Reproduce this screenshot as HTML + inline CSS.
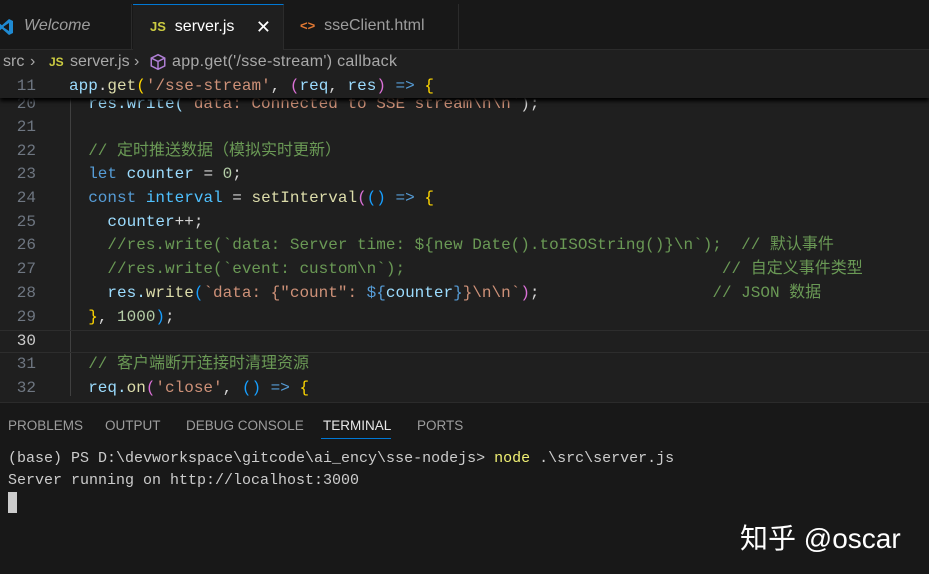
<!DOCTYPE html>
<html><head><meta charset="utf-8"><style>
*{margin:0;padding:0;box-sizing:border-box}
body{width:929px;height:574px;overflow:hidden;background:#1f1f1f;font-family:"Liberation Sans","Noto Sans CJK SC",sans-serif;position:relative;color:#ccc}
.tabs{position:absolute;left:0;top:0;width:929px;height:50px;background:#181818;border-bottom:1px solid #2b2b2b}
.tab{position:absolute;top:4px;height:46px;font-size:16px;line-height:44px;color:#9d9d9d;border-right:1px solid #2b2b2b}
.ed{position:absolute;left:0;top:50px;width:929px;height:352px;background:#1f1f1f;overflow:hidden}
.m{font-family:"Liberation Mono","Noto Sans CJK SC",monospace;font-size:16px;white-space:pre;line-height:24px;height:24px}
.ln{position:absolute;left:0;width:36px;text-align:right;color:#6e7681}
.cd{position:absolute;left:69px;color:#9cdcfe}
.c{color:#6a9955}.k{color:#569cd6}.f{color:#dcdcaa}.s{color:#ce9178}.y{color:#ffd700}.p{color:#da70d6}.b{color:#179fff}.n{color:#b5cea8}.w{color:#d4d4d4}
.panel{position:absolute;left:0;top:402px;width:929px;height:172px;background:#181818;border-top:1px solid #2b2b2b}
.pt{position:absolute;top:15px;font-size:13.5px;color:#9d9d9d}
.t{position:absolute;left:8px;font-family:"Liberation Mono",monospace;font-size:15px;color:#cccccc;white-space:pre}
.bc{position:absolute;left:0;top:51px;height:24px;font-size:16px;line-height:22px;color:#a9a9a9;white-space:nowrap;z-index:5;background:#1f1f1f;width:929px}
.bc span{position:absolute;top:0}
</style></head><body>
<div class="tabs">
 <div class="tab" style="left:0;width:132px;font-style:italic;padding-left:24px">Welcome
  <svg style="position:absolute;left:-4px;top:14px" width="18" height="18" viewBox="0 0 18 18"><path d="M13 1 L17 3 V15 L13 17 L4 9 Z" fill="#1f8ad2"/><path d="M13 5 V13 L7 9 Z" fill="#181818"/><path d="M0 6 L3 5 L8 9 L3 13 L0 12 Z" fill="#1f8ad2"/></svg></div>
 <div class="tab" style="left:133px;width:151px;background:#1f1f1f;color:#fff;border-top:1px solid #0078d4;padding-left:17px"><span style="color:#cbcb41;font-weight:bold;font-size:13px">JS</span>&nbsp; server.js<span style="position:absolute;right:12px;top:0;font-size:18px">✕</span></div>
 <div class="tab" style="left:284px;width:175px;padding-left:16px"><span style="color:#e37933;font-size:13px;font-weight:bold">&lt;&gt;</span>&nbsp; sseClient.html</div>
</div>
<div class="ed">
 <div style="position:absolute;left:70px;top:46px;width:1px;height:300px;background:#404040"></div>
 <div style="position:absolute;left:0;top:280px;width:929px;height:23px;border-top:1px solid #2d2d2d;border-bottom:1px solid #2d2d2d"></div>
 <div class="m ln" style="top:42px">20</div><div class="m cd" style="top:42px">  res.write(<span class="s">`data: Connected to SSE stream\n\n`</span><span class="w">);</span></div>
 <div class="m ln" style="top:65px">21</div>
 <div class="m ln" style="top:89px">22</div><div class="m cd c" style="top:89px">  // 定时推送数据（模拟实时更新）</div>
 <div class="m ln" style="top:112px">23</div><div class="m cd" style="top:112px">  <span class="k">let</span> counter <span class="w">=</span> <span class="n">0</span><span class="w">;</span></div>
 <div class="m ln" style="top:136px">24</div><div class="m cd" style="top:136px">  <span class="k">const</span> <span style="color:#4fc1ff">interval</span> <span class="w">=</span> <span class="f">setInterval</span><span class="p">(</span><span class="b">()</span> <span class="k">=&gt;</span> <span class="y">{</span></div>
 <div class="m ln" style="top:160px">25</div><div class="m cd" style="top:160px">    counter<span class="w">++;</span></div>
 <div class="m ln" style="top:183px">26</div><div class="m cd c" style="top:183px">    //res.write(`data: Server time: ${new Date().toISOString()}\n`);  // 默认事件</div>
 <div class="m ln" style="top:207px">27</div><div class="m cd c" style="top:207px">    //res.write(`event: custom\n`);                                 // 自定义事件类型</div>
 <div class="m ln" style="top:231px">28</div><div class="m cd" style="top:231px">    res.<span class="f">write</span><span class="b">(</span><span class="s">`data: {"count": </span><span class="k">${</span>counter<span class="k">}</span><span class="s">}\n\n`</span><span class="p">)</span><span class="w">;</span>                  <span class="c">// JSON 数据</span></div>
 <div class="m ln" style="top:255px">29</div><div class="m cd" style="top:255px">  <span class="y">}</span><span class="w">, </span><span class="n">1000</span><span class="b">)</span><span class="w">;</span></div>
 <div class="m ln" style="top:279px;color:#ccc">30</div>
 <div class="m ln" style="top:302px">31</div><div class="m cd c" style="top:302px">  // 客户端断开连接时清理资源</div>
 <div class="m ln" style="top:326px">32</div><div class="m cd" style="top:326px">  req.<span class="f">on</span><span class="p">(</span><span class="s">'close'</span><span class="w">, </span><span class="b">()</span> <span class="k">=&gt;</span> <span class="y">{</span></div>
 <div style="position:absolute;left:0;top:24px;width:929px;height:24px;background:#1f1f1f;box-shadow:0 3px 4px #000"></div>
 <div class="m ln" style="top:24px">11</div><div class="m cd" style="top:24px"><span style="color:#9cdcfe">app</span><span class="w">.</span><span class="f">get</span><span class="y">(</span><span class="s">'/sse-stream'</span><span class="w">, </span><span class="p">(</span>req<span class="w">, </span>res<span class="p">)</span> <span class="k">=&gt;</span> <span class="y">{</span></div>
</div>
<div class="bc"><span style="left:3px">src</span><span style="left:30px">›</span><span style="left:49px;color:#cbcb41;font-weight:bold;font-size:12px">JS</span><span style="left:70px">server.js</span><span style="left:134px">›</span><svg width="18" height="18" viewBox="0 0 16 16" style="position:absolute;left:149px;top:2px"><path d="M8 1.5 L14 4.5 V11.5 L8 14.5 L2 11.5 V4.5 Z M2 4.5 L8 7.5 L14 4.5 M8 7.5 V14.5" fill="none" stroke="#b180d7" stroke-width="1.3"/></svg><span style="left:172px;letter-spacing:0.3px">app.get('/sse-stream') callback</span></div>
<div class="panel">
 <div class="pt" style="left:8px">PROBLEMS</div>
 <div class="pt" style="left:105px">OUTPUT</div>
 <div class="pt" style="left:186px">DEBUG CONSOLE</div>
 <div class="pt" style="left:323px;color:#e7e7e7">TERMINAL</div>
 <div style="position:absolute;left:321px;top:35px;width:70px;height:1px;background:#0078d4"></div>
 <div class="pt" style="left:417px">PORTS</div>
 <div class="t" style="top:47px">(base) PS D:\devworkspace\gitcode\ai_ency\sse-nodejs&gt; <span style="color:#f1f174">node</span> .\src\server.js</div>
 <div class="t" style="top:69px">Server running on http://localhost:3000</div>
 <div style="position:absolute;left:8px;top:89px;width:9px;height:21px;background:#ccc"></div>
 <div style="position:absolute;left:740px;top:114px;font-size:28px;color:#fff;white-space:nowrap;font-family:'Liberation Sans','Noto Sans CJK SC',sans-serif">知乎 @oscar</div>
</div>
</body></html>
